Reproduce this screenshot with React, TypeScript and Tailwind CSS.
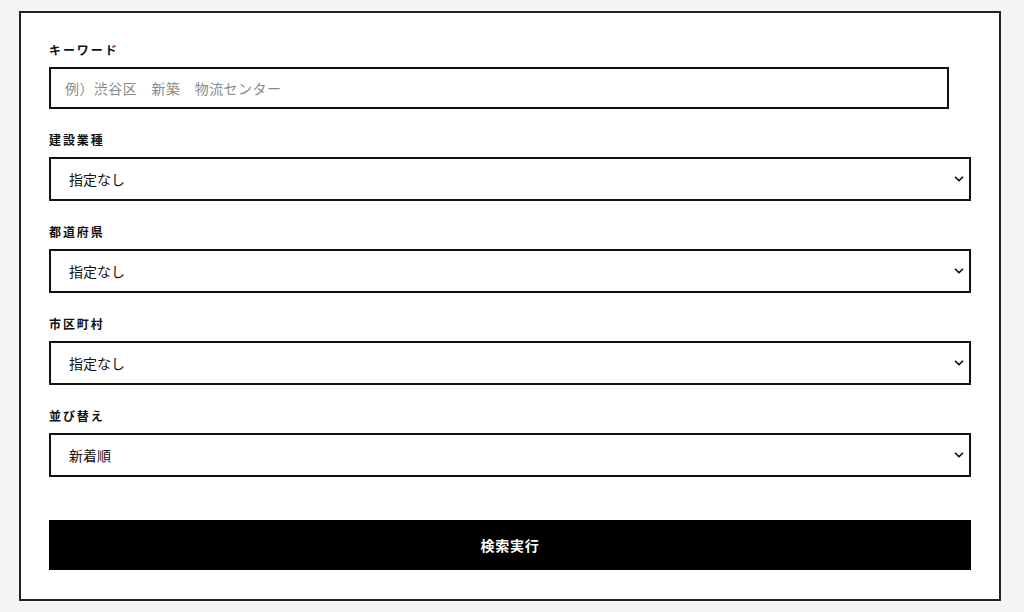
import { ChevronDown } from "lucide-react";

const font = { fontFamily: '"Noto Sans CJK JP", "Noto Sans", sans-serif' };

type SelectFieldProps = {
	label: string;
	value: string;
	options: string[];
};

function FieldLabel({ children }: { children: string }) {
	return <label className="block text-[12px] leading-[18px] font-bold tracking-[0.16em] text-[#111] mb-2">{children}</label>;
}

function SelectField({ label, value, options }: SelectFieldProps) {
	return (
		<div className="mb-[22px]">
			<FieldLabel>{label}</FieldLabel>
			<div className="relative">
				<select
					defaultValue={value}
					className="block w-full h-[44px] appearance-none border-2 border-[#111] bg-white pl-[18px] pr-10 text-[14px] text-[#111] outline-none rounded-none"
					style={font}
				>
					{options.map((o) => (
						<option key={o}>{o}</option>
					))}
				</select>
				<ChevronDown className="pointer-events-none absolute right-[5px] top-1/2 -translate-y-1/2 size-[14px] text-[#111]" strokeWidth={3} />
			</div>
		</div>
	);
}

export default function App() {
	return (
		<div className="min-h-[612px] bg-[#f4f4f4] pt-[11px] pl-[19px]" style={font}>
			<form className="w-[982px] h-[590px] border-2 border-[#222] bg-white p-[28px] pb-0">
				<div className="mb-[22px]">
					<FieldLabel>キーワード</FieldLabel>
					<input
						type="text"
						placeholder="例）渋谷区　新築　物流センター"
						className="block w-[900px] h-[42px] border-2 border-[#111] bg-white px-[14px] text-[14px] tracking-[0.03em] text-[#111] placeholder:text-[#8a8a8a] outline-none"
						style={font}
					/>
				</div>
				<SelectField label="建設業種" value="指定なし" options={["指定なし", "物流施設", "工場", "オフィス"]} />
				<SelectField label="都道府県" value="指定なし" options={["指定なし", "東京都", "大阪府"]} />
				<SelectField label="市区町村" value="指定なし" options={["指定なし"]} />
				<SelectField label="並び替え" value="新着順" options={["新着順", "古い順"]} />
				<button type="button" className="mt-[43px] block w-full h-[50px] bg-black text-white text-[14px] font-bold tracking-[0.05em]" style={font}>
					検索実行
				</button>
			</form>
		</div>
	);
}
